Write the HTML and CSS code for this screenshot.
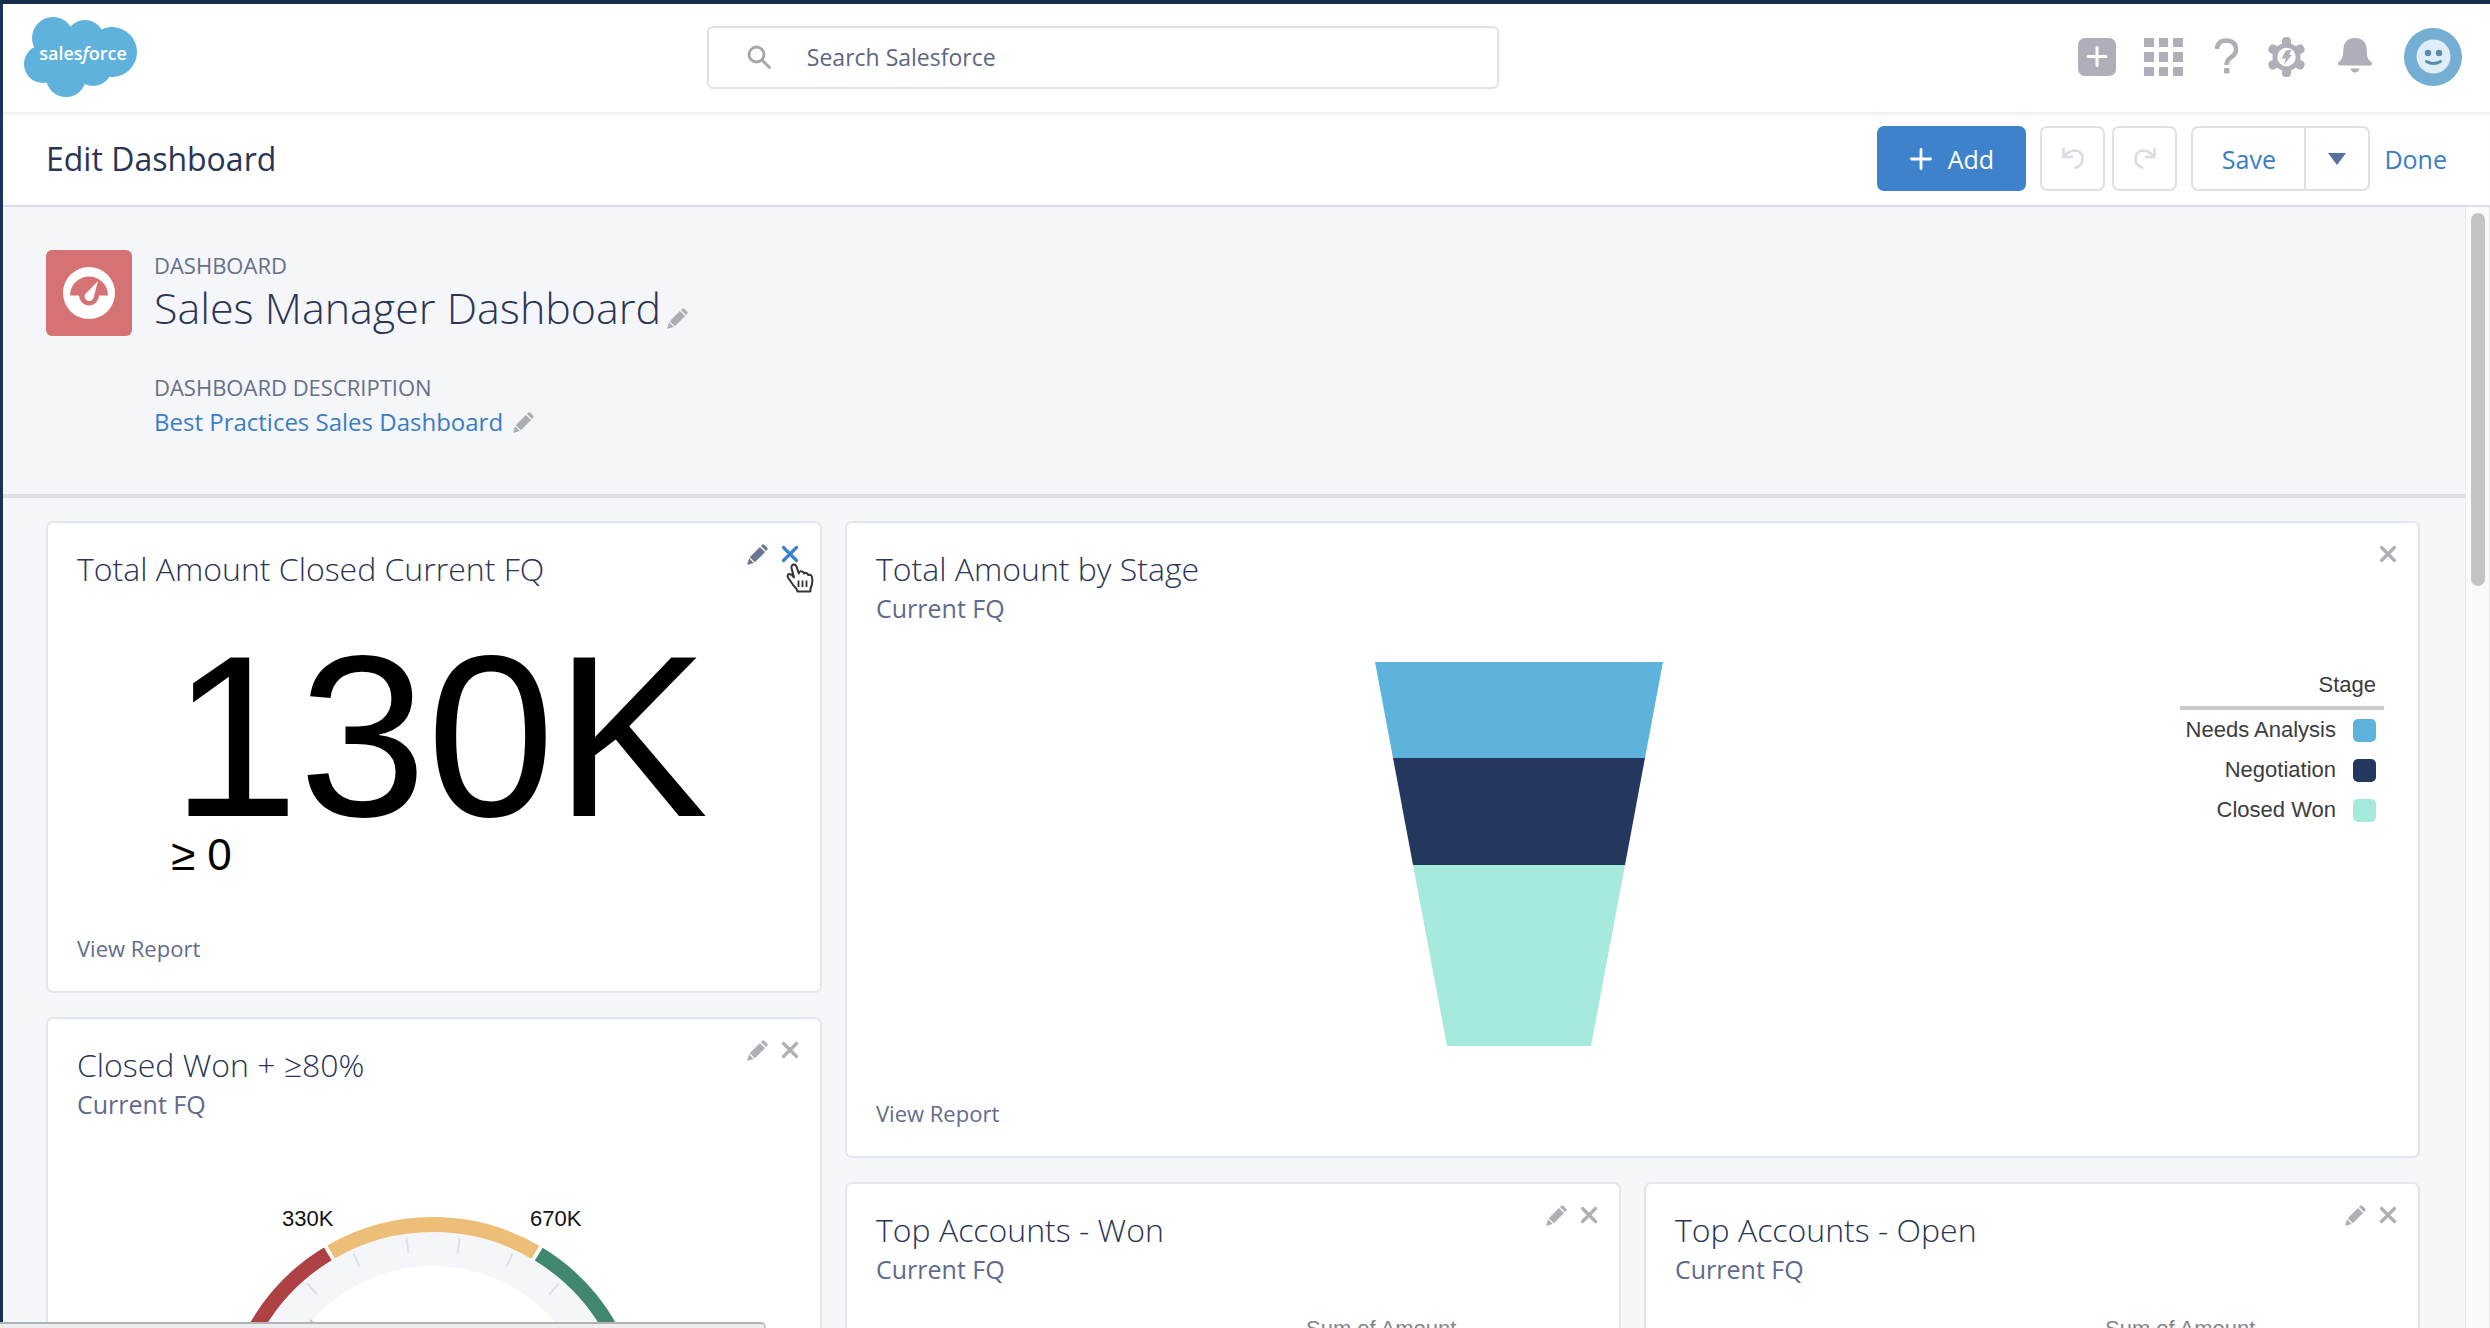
FILE: index.html
```
<!DOCTYPE html>
<html lang="en">
<head>
<meta charset="utf-8">
<meta name="viewport" content="width=device-width, initial-scale=1">
<title>Edit Dashboard | Salesforce</title>
<link rel="stylesheet" href="styles.css">
</head>
<body>
<svg class="sprite" aria-hidden="true">
  <symbol id="pencil" viewBox="0 0 20 20">
    <path d="M12.300 2.800l4.900 4.900-9.700 9.700-4.900-4.900zM13.300 1.900l1-1q1.200-1.100 2.400 0l2.400 2.400q1.100 1.200 0 2.400l-1 1zM2 13.600l4.400 4.400L.9 19.700q-.8.200-.6-.6z" fill="currentColor"/>
  </symbol>
  <symbol id="close" viewBox="0 0 18 18">
    <path d="M2.500 2.500l13 13M15.500 2.500l-13 13" fill="none" stroke="currentColor" stroke-width="3.200" stroke-linecap="round"/>
  </symbol>
</svg>
<div class="app">
  <header class="global">
    <a class="logo" href="#" aria-label="Salesforce home">
      <svg width="114" height="80" viewBox="0 0 114 80">
        <g fill="#5fb2dc">
          <ellipse cx="29" cy="21" rx="21" ry="21"/>
          <circle cx="61" cy="22" r="19"/>
          <circle cx="88" cy="35" r="25"/>
          <circle cx="19" cy="47" r="19"/>
          <circle cx="42" cy="60" r="20"/>
          <circle cx="69" cy="50" r="19"/>
          <path d="M18 22h70v28H66L42 60 18 50z"/>
        </g>
        <text class="logo-text" x="59" y="43" text-anchor="middle">sales<tspan class="logo-f">f</tspan>orce</text>
      </svg>
    </a>
    <label class="search">
      <svg width="24" height="24" viewBox="0 0 24 24" fill="none" stroke="#a3a6ab" stroke-width="2.800" stroke-linecap="round"><circle cx="9.500" cy="9.500" r="7.500"/><path d="M15.500 15.500l7 7"/></svg>
      <input type="search" placeholder="Search Salesforce" aria-label="Search Salesforce">
    </label>
    <nav class="tools" aria-label="Global actions">
      <button type="button" aria-label="Create"><svg width="38" height="38" viewBox="0 0 38 38"><rect width="38" height="38" rx="7" fill="#adb0b9"/><path d="M19 9.500v18M10 18.500h18" stroke="#fff" stroke-width="3" stroke-linecap="round"/></svg></button>
      <button type="button" aria-label="App launcher"><svg width="47" height="38" viewBox="0 0 47 38" fill="#adb0b9"><path d="M4 0h10v9H4zM19 0h9v9h-9zM33 0h10v9H33zM4 14h10v10H4zM19 14h9v10h-9zM33 14h10v10H33zM4 29h10v9H4zM19 29h9v9h-9zM33 29h10v9H33z"/></svg></button>
      <button type="button" aria-label="Help"><svg width="31" height="38" viewBox="0 0 31 38"><path d="M6 11Q6.500 2.500 15.500 2.500 25 3 25 11.500 25 16 20.500 19 15.500 22 15.500 27" fill="none" stroke="#adb0b9" stroke-width="4.600"/><rect x="13" y="30" width="5.500" height="5.500" rx="1" fill="#adb0b9"/></svg></button>
      <button type="button" aria-label="Setup"><svg width="41" height="40" viewBox="0 0 41 40"><g fill="#adb0b9"><circle cx="20.500" cy="20" r="14"/><rect x="16" y="0" width="9" height="40" rx="4"/><rect x="16" y="0" width="9" height="40" rx="4" transform="rotate(60 20.500 20)"/><rect x="16" y="0" width="9" height="40" rx="4" transform="rotate(120 20.500 20)"/></g><circle cx="20.500" cy="20" r="9.200" fill="#fff"/><path d="M20 13.500l5.500-.8-2.300 5h3L18 27.500l1.600-6h-4z" fill="#adb0b9"/></svg></button>
      <button type="button" aria-label="Notifications"><svg width="49" height="40" viewBox="0 0 49 40" fill="#adb0b9"><path d="M24 1c7.500 0 11 4.500 11.500 10 .4 6 .5 10 3 12.500 2 1.500 2.500 1.500 2.500 3 0 1.500-.5 2-2 2H9c-1.500 0-2-.5-2-2 0-1.500.5-1.500 2.500-3 2.500-2.500 2.600-6.500 3-12.500C13 5.500 16.500 1 24 1zM19.500 31.500h9q-1 4-4.500 4t-4.500-4z"/></svg></button>
      <button type="button" aria-label="User profile"><svg width="58" height="58" viewBox="0 0 58 58"><circle cx="29" cy="29" r="29" fill="#74aed2"/><circle cx="29.500" cy="28.500" r="17" fill="#e0eefa"/><circle cx="24" cy="25" r="3.200" fill="#5b8cae"/><circle cx="35" cy="25" r="3.200" fill="#5b8cae"/><path d="M22.500 33.500q7 4 14 0" fill="none" stroke="#5b8cae" stroke-width="3" stroke-linecap="round"/></svg></button>
    </nav>
  </header>

  <div class="pagebar">
    <h1>Edit Dashboard</h1>
    <div class="commands">
      <button type="button" class="btn primary"><svg width="22" height="22" viewBox="0 0 22 22"><path d="M11 1.500v19M1.500 11h19" stroke="#fff" stroke-width="2.800" stroke-linecap="round"/></svg>Add</button>
      <div class="history">
        <button type="button" class="btn square" aria-label="Undo" disabled><svg width="22" height="22" viewBox="0 0 22 22" fill="none" stroke="#dcdde2" stroke-width="2.600"><path d="M1.500 0v9h9.500M2 8.500Q7 2.500 13 2.500q7.500.5 7.500 8.500 0 7-8 9"/></svg></button>
        <button type="button" class="btn square" aria-label="Redo" disabled><svg width="22" height="22" viewBox="0 0 22 22" fill="none" stroke="#dcdde2" stroke-width="2.600"><path d="M20.500 0v9H11M20 8.500Q15 2.500 9 2.500q-7.500.5-7.500 8.500 0 7 8 9"/></svg></button>
      </div>
      <div class="split">
        <button type="button" class="btn save">Save</button><button type="button" class="btn more" aria-label="More save options"><svg width="18" height="12" viewBox="0 0 18 12"><path d="M0 0h18L9 12z" fill="#54709f"/></svg></button>
      </div>
      <a class="done" href="#">Done</a>
    </div>
  </div>

  <div class="scroller">
    <main>
      <section class="intro">
        <svg class="badge" width="86" height="86" viewBox="0 0 86 86" aria-hidden="true">
          <rect width="86" height="86" rx="6" fill="#d57374"/>
          <circle cx="43" cy="43" r="26" fill="#fff"/>
          <path d="M24 45.500a19 19 0 1 1 38 0h-9a10 10 0 1 1-20 0z" fill="#d57374"/>
          <path d="M52 31l-4.500 17a4.600 4.600 0 1 1-8.500-3.500z" fill="#fff"/>
        </svg>
        <div>
          <p class="eyebrow">DASHBOARD</p>
          <div class="line title"><h2>Sales Manager Dashboard</h2><button type="button" aria-label="Edit title"><svg width="21" height="21"><use href="#pencil"/></svg></button></div>
          <p class="eyebrow second">DASHBOARD DESCRIPTION</p>
          <div class="line desc"><a href="#">Best Practices Sales Dashboard</a><button type="button" aria-label="Edit description"><svg width="21" height="21"><use href="#pencil"/></svg></button></div>
        </div>
      </section>

      <div class="board">
        <div class="column">
          <article class="card metric-card">
            <div class="head">
              <div><h3>Total Amount Closed Current FQ</h3></div>
              <div class="actions hovered">
                <button type="button" aria-label="Edit"><svg width="21" height="21"><use href="#pencil"/></svg></button>
                <button type="button" class="remove" aria-label="Remove"><svg width="18" height="18"><use href="#close"/></svg>
                  <svg class="pointer" width="28" height="31" viewBox="0 0 28 31"><path d="M6 2.500q2.500-2.500 4.500 1l2.300 7q.5-3 3.400-2 1.400.4 1.800 2 2.800-1.800 4.300 1.500 3.200-1 3.800 2.500.8 4-.3 7.500-1.300 2.500-1.500 6.500H11.500q-1-3.500-4-6l-5.500-8q-1.300-3 1.500-3.500 2 0 4.500 3.500L5.500 5q-.3-1.500.5-2.500z" fill="#fff" stroke="#333" stroke-width="2" stroke-linejoin="round"/><path d="M12.500 17.500v6.500M16.500 17.500v6.500M20.500 17.500v6.500" stroke="#333" stroke-width="1.800"/></svg>
                </button>
              </div>
            </div>
            <div class="metric"><p class="big">130K</p><p class="small">≥ 0</p></div>
            <a class="report" href="#">View Report</a>
          </article>
          <article class="card">
            <div class="head">
              <div><h3>Closed Won + ≥80%</h3><p class="sub">Current FQ</p></div>
              <div class="actions">
                <button type="button" aria-label="Edit"><svg width="21" height="21"><use href="#pencil"/></svg></button>
                <button type="button" aria-label="Remove"><svg width="18" height="18"><use href="#close"/></svg></button>
              </div>
            </div>
            <svg class="gauge" width="480" height="260" viewBox="0 0 480 260" role="img" aria-label="Closed won gauge">
              <g fill="none">
                <path d="M54 235a179 179 0 0 1 358 0" stroke="#f4f6fa" stroke-width="34"/>
                <path pathLength="1000" stroke-dasharray="327 1000" d="M29.500 235a203.500 203.500 0 0 1 407 0" stroke="#ae4144" stroke-width="15"/>
                <path pathLength="1000" stroke-dasharray="0 333 335 1000" d="M29.500 235a203.500 203.500 0 0 1 407 0" stroke="#edbe77" stroke-width="15"/>
                <path pathLength="1000" stroke-dasharray="0 674 326 1000" d="M29.500 235a203.500 203.500 0 0 1 407 0" stroke="#41866f" stroke-width="15"/>
              </g>
              <g stroke="#dfe0e5" stroke-width="2">
                <path d="M233 43v15" transform="rotate(-41 233 235)"/>
                <path d="M233 43v15" transform="rotate(-24.500 233 235)"/>
                <path d="M233 43v15" transform="rotate(-8 233 235)"/>
                <path d="M233 43v15" transform="rotate(8 233 235)"/>
                <path d="M233 43v15" transform="rotate(24.500 233 235)"/>
                <path d="M233 43v15" transform="rotate(41 233 235)"/>
                <path d="M110 127l6 5" stroke="#c4c6cc"/>
              </g>
              <text class="gauge-label" x="82" y="33">330K</text>
              <text class="gauge-label" x="330" y="33">670K</text>
            </svg>
          </article>
        </div>

        <div class="wide">
          <article class="card funnel-card">
            <div class="head">
              <div><h3>Total Amount by Stage</h3><p class="sub">Current FQ</p></div>
              <div class="actions">
                <button type="button" aria-label="Remove"><svg width="18" height="18"><use href="#close"/></svg></button>
              </div>
            </div>
            <div class="funnel">
              <div class="plot">
                <svg width="288" height="384" viewBox="0 0 288 384" role="img" aria-label="Funnel by stage">
                  <path d="M0 0h288l-18 96H18z" fill="#5db3dc"/>
                  <path d="M18 96h252l-20 107H38z" fill="#24385f"/>
                  <path d="M38 203h212l-34 181H72z" fill="#a5eadd"/>
                </svg>
              </div>
              <div class="legend">
                <p>Stage</p>
                <ul>
                  <li>Needs Analysis<span class="swatch sky"></span></li>
                  <li>Negotiation<span class="swatch navy"></span></li>
                  <li>Closed Won<span class="swatch mint"></span></li>
                </ul>
              </div>
            </div>
            <a class="report" href="#">View Report</a>
          </article>
          <article class="card">
            <div class="head">
              <div><h3>Top Accounts - Won</h3><p class="sub">Current FQ</p></div>
              <div class="actions">
                <button type="button" aria-label="Edit"><svg width="21" height="21"><use href="#pencil"/></svg></button>
                <button type="button" aria-label="Remove"><svg width="18" height="18"><use href="#close"/></svg></button>
              </div>
            </div>
            <p class="axis">Sum of Amount</p>
          </article>
          <article class="card">
            <div class="head">
              <div><h3>Top Accounts - Open</h3><p class="sub">Current FQ</p></div>
              <div class="actions">
                <button type="button" aria-label="Edit"><svg width="21" height="21"><use href="#pencil"/></svg></button>
                <button type="button" aria-label="Remove"><svg width="18" height="18"><use href="#close"/></svg></button>
              </div>
            </div>
            <p class="axis">Sum of Amount</p>
          </article>
        </div>
      </div>
    </main>
    <div class="track" aria-hidden="true"><div class="thumb"></div></div>
  </div>
</div>
<div class="status" aria-hidden="true"></div>
</body>
</html>
```
FILE: styles.css
```
* { box-sizing: border-box; margin: 0; padding: 0; }
body { font-family: "Open Sans", "Noto Sans", sans-serif; color: #2a3556; background: #fff; }
a { text-decoration: none; }
button { font: inherit; background: none; border: 0; color: inherit; cursor: pointer; }
svg { display: block; flex: none; }
ul { list-style: none; }
.sprite { position: absolute; width: 0; height: 0; }

.app { display: flex; flex-direction: column; height: 100vh; overflow: hidden; border-top: 4px solid #172b4b; border-left: 3px solid #1d3459; }

.global { display: flex; align-items: center; justify-content: space-between; flex: none; height: 108px; padding: 0 28px 2px 21px; }
.logo-text { font-size: 18px; font-weight: 600; fill: #fff; }
.logo-f { font-style: italic; }
.search { display: flex; align-items: center; width: 32.5%; height: 63px; margin-right: 10px; padding: 0 38px; gap: 36px; border: 2px solid #e0e2e6; border-radius: 6px; }
.search input { flex: 1; min-width: 0; border: 0; outline: 0; background: none; font: inherit; font-size: 23px; }
.search input::placeholder { color: #5d6782; opacity: 1; }
.tools { display: flex; align-items: center; gap: 24px; }

.pagebar { display: flex; align-items: center; justify-content: space-between; flex: none; height: 95px; padding: 0 43px; border-bottom: 2px solid #dcdee3; box-shadow: inset 0 4px 3px -1px #f1f1f2; }
.pagebar h1 { font-size: 32px; line-height: 40px; font-weight: 400; }
.commands, .history, .split { display: flex; align-items: center; }
.commands { gap: 14px; font-size: 25px; color: #3a7dc4; }
.history { gap: 7px; }
.btn { display: flex; align-items: center; justify-content: center; height: 65px; border: 2px solid #dfe1e6; border-radius: 7px; }
.primary { gap: 16px; width: 149px; border-color: #3f82cc; background: #3f82cc; color: #fff; }
.square { width: 65px; }
.save { width: 115px; border-radius: 7px 0 0 7px; }
.more { width: 66px; margin-left: -2px; border-radius: 0 7px 7px 0; }
.done { color: #3a7dc4; }

.scroller { display: flex; flex: 1; min-height: 0; }
main { flex: 1; min-width: 0; overflow: hidden; background: #f4f8fb; }
.track { flex: none; width: 25px; padding: 6px 5px; border-left: 1px solid #e6e7e9; border-right: 1px solid #e6e7e9; background: #fafafa; }
.thumb { width: 14px; height: 373px; border-radius: 7px; background: #c3c3c3; }

.intro { display: flex; gap: 22px; padding: 43px 43px 52px; border-bottom: 4px solid #dde1e5; background: #f4f6fa; }
.eyebrow { font-size: 22px; line-height: 30px; color: #666f8b; }
.second { margin-top: 36px; }
.line { display: flex; align-items: flex-end; gap: 10px; }
.line button { color: #acaeb2; }
.title { gap: 6px; }
.title h2 { font-size: 43px; line-height: 56px; font-weight: 300; }
.title button { padding-bottom: 7px; }
.desc { align-items: center; }
.desc a { font-size: 24px; line-height: 40px; color: #3a7dc4; }

.board { display: grid; grid-template-columns: repeat(3, 1fr); gap: 23px; padding: 23px 45px 0 43px; }
.column { display: flex; flex-direction: column; gap: 24px; }
.wide { grid-column: span 2; display: grid; grid-template-columns: repeat(2, 1fr); align-content: start; gap: 24px 23px; }
.card { display: flex; flex-direction: column; min-height: 472px; padding: 18px 18px 29px 29px; border: 2px solid #e3e6eb; border-radius: 7px; background: #fff; }
.funnel-card { grid-column: span 2; min-height: 637px; }
.head { display: flex; justify-content: space-between; align-items: flex-start; }
h3 { padding-top: 8px; font-size: 32px; line-height: 40px; font-weight: 300; }
.sub { font-size: 25px; line-height: 38px; color: #5f6a8d; }
.actions { display: flex; gap: 9px; color: #adb0b6; }
.actions button { display: flex; align-items: center; justify-content: center; width: 24px; height: 26px; }
.hovered { color: #6c7690; }
.actions .remove { position: relative; color: #3a82cc; }
.pointer { position: absolute; left: 8px; top: 22px; }
.report { align-self: flex-start; margin-top: auto; font-size: 22px; line-height: 28px; color: #626c8c; }

.metric { align-self: center; margin-top: 48px; font-family: "Liberation Sans", Arial, sans-serif; color: #000; }
.big { font-size: 230px; line-height: 200px; }
.small { font-size: 44px; line-height: 36px; }
.gauge { align-self: center; margin-top: 70px; }
.gauge-label { font: 22px "Liberation Sans", Arial, sans-serif; fill: #111; }

.funnel { display: flex; gap: 18px; padding: 35px 16px 0 0; }
.plot { display: flex; justify-content: center; flex: 1; }
.legend { width: 204px; padding-top: 8px; font: 22px/30px "Liberation Sans", Arial, sans-serif; color: #3c3c40; text-align: right; }
.legend p { padding: 0 8px 6px; border-bottom: 4px solid #cbcbcb; }
.legend li { display: flex; align-items: center; justify-content: flex-end; gap: 17px; height: 40px; padding-right: 8px; }
.swatch { width: 23px; height: 23px; border-radius: 5px; }
.sky { background: #5db3dc; }
.navy { background: #24385f; }
.mint { background: #a5eadd; }
.axis { margin-top: 28px; padding-left: 430px; font: 22px/26px "Liberation Sans", Arial, sans-serif; color: #85878c; }

.status { position: fixed; left: 0; bottom: 0; width: 766px; height: 6px; border-top: 2px solid #b2b3b5; border-right: 2px solid #c8c9cb; border-radius: 0 5px 0 0; background: #eeeeef; }
```
